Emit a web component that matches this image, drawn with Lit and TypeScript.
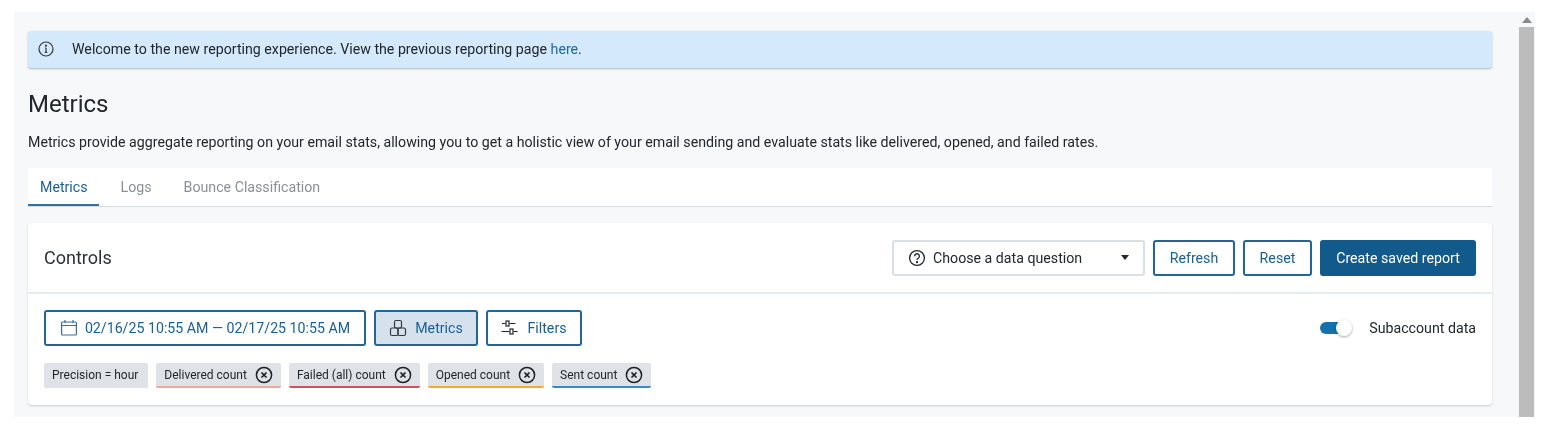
import { LitElement, html, css } from "lit";
import { customElement } from "lit/decorators.js";

const closeIcon = html`<svg class="x" viewBox="0 0 18 18" width="18" height="18" fill="none" stroke="#1c2125" stroke-width="1.5"><circle cx="9" cy="9" r="7.6"/><path d="M6.5 6.5l5 5M11.5 6.5l-5 5" stroke-width="1.7"/></svg>`;

@customElement("app-root")
export class AppRoot extends LitElement {
  static styles = css`
    :host { display: block; height: 428px; background: #fff; font-family: Roboto, "Liberation Sans", sans-serif; color: #22272b; overflow: hidden; padding: 12px 15px 0 14px; box-sizing: border-box; }
    * { box-sizing: border-box; }
    .frame { display: flex; height: 405px; background: #f6f8fa; filter: blur(0.35px); }
    .page { flex: 1; min-width: 0; padding: 19px 13px 0 14px; }
    .scroll { width: 30px; display: flex; flex-direction: column; align-items: flex-end; padding-right: 1px; }
    .arrow { width: 15px; height: 15px; display: flex; align-items: center; justify-content: center; }
    .thumb { width: 15px; flex: 1; background: #bcbcbc; }
    .banner { height: 37px; background: #d4e9fb; border-radius: 3px; box-shadow: 0 1px 2px rgba(40,60,80,.35); display: flex; align-items: center; padding: 0 0 2px 9px; font-size: 14.2px; gap: 17px; }
    .banner a { color: #1c6aa4; }
    h1 { font-size: 24px; font-weight: 400; line-height: 32px; margin: 20px 0 0; color: #22272b; }
    p { font-size: 14.2px; line-height: 20px; margin: 12px 0 0; }
    .tabs { display: flex; height: 39px; margin-top: 16px; background: #fff; border-bottom: 1px solid #d5dbe1; font-size: 14.2px; color: #8a9097; }
    .tab { padding: 0 12px; line-height: 39px; height: 38px; margin-right: 8px; }
    .tab.on { color: #1a5f92; border-bottom: 2px solid #2f72a5; padding-right: 11px; margin-right: 10px; }
    .card { margin-top: 16px; height: 182px; background: #fff; border-radius: 4px; box-shadow: 0 1px 2px rgba(40,60,80,.22); }
    .head { height: 71px; border-bottom: 2px solid #e7eaee; display: flex; align-items: center; padding: 0 16px; gap: 8px; }
    .head h2 { font-size: 18px; font-weight: 400; margin: 0; flex: 1; color: #2b3138; }
    .btn { height: 36px; display: inline-flex; align-items: center; justify-content: center; border: 2px solid #246596; border-radius: 3px; background: #fff; color: #1a5f92; font-size: 14.2px; gap: 8px; }
    .btn.primary { background: #12598c; border-color: #12598c; color: #fff; width: 156px; }
    .btn.active { background: #d5e2ee; }
    .btn.date { width: 322px; gap: 7px; }
    .btn.refresh { width: 82px; }
    .btn.reset { width: 69px; }
    .btn.metrics { width: 104px; }
    .btn.filters { width: 96px; }
    .select { width: 253px; height: 36px; border: 2px solid #dadfe4; border-radius: 3px; display: flex; align-items: center; padding: 0 14px; font-size: 14.2px; gap: 7px; color: #22272b; }
    .select span { flex: 1; }
    .caret { width: 0; height: 0; border-left: 4px solid transparent; border-right: 4px solid transparent; border-top: 5px solid #22272b; }
    .body { padding: 16px; }
    .row { display: flex; align-items: center; gap: 8px; }
    .spacer { flex: 1; }
    .switch { display: flex; align-items: center; font-size: 14.2px; gap: 17px; }
    .track { width: 32px; height: 12px; position: relative; }
    .track::before { content: ""; position: absolute; left: 0; top: 0; width: 26px; height: 12px; border-radius: 6px; background: #1371ae; }
    .knob { position: absolute; right: 0; top: -2px; width: 16px; height: 16px; border-radius: 50%; background: #fff; box-shadow: 0 1px 3px rgba(0,0,0,.35); }
    .chips { display: flex; gap: 8px; margin-top: 17px; }
    .chip { height: 25px; background: #dfe3e7; border-radius: 2px; padding: 0 8px; display: flex; align-items: center; gap: 8px; font-size: 12px; border-bottom: 2px solid transparent; }
    .chip.plain { padding: 0 10px 0 8px; }
    .chip.d { border-bottom-color: #e8a99c; }
    .chip.f { border-bottom-color: #d0505b; }
    .chip.o { border-bottom-color: #f0a838; }
    .chip.s { border-bottom-color: #3a88c4; }
  `;

  render() {
    return html`<div class="frame">
      <div class="page">
        <div class="banner">
          <svg width="18" height="18" viewBox="0 0 18 18" fill="none" stroke="#33393f" stroke-width="1.2"><circle cx="9" cy="9" r="7"/><path d="M9 8v4.2M7.8 12.4h2.4M8 8h1" /><circle cx="9" cy="5.7" r=".5" fill="#33393f"/></svg>
          <div>Welcome to the new reporting experience. View the previous reporting page <a>here</a>.</div>
        </div>
        <h1>Metrics</h1>
        <p>Metrics provide aggregate reporting on your email stats, allowing you to get a holistic view of your email sending and evaluate stats like delivered, opened, and failed rates.</p>
        <div class="tabs">
          <div class="tab on">Metrics</div>
          <div class="tab">Logs</div>
          <div class="tab">Bounce Classification</div>
        </div>
        <div class="card">
          <div class="head">
            <h2>Controls</h2>
            <div class="select">
              <svg width="18" height="18" viewBox="0 0 18 18" fill="none" stroke="#22272b" stroke-width="1.3"><circle cx="9" cy="9" r="7.4"/><path d="M6.6 7.2a2.4 2.4 0 1 1 3.7 2c-.9.5-1.3.9-1.3 1.9"/><circle cx="9" cy="13.2" r=".5" fill="#22272b"/></svg>
              <span>Choose a data question</span><i class="caret"></i>
            </div>
            <div class="btn refresh">Refresh</div>
            <div class="btn reset">Reset</div>
            <div class="btn primary">Create saved report</div>
          </div>
          <div class="body">
            <div class="row">
              <div class="btn date">
                <svg width="18" height="18" viewBox="0 0 18 18" fill="none" stroke="#3a719c" stroke-width="1.2"><rect x="1.6" y="3" width="14.8" height="13" rx="1"/><path d="M1.6 6.5h14.8M5 1v3M13 1v3"/></svg>
                02/16/25 10:55 AM — 02/17/25 10:55 AM
              </div>
              <div class="btn active metrics">
                <svg width="18" height="18" viewBox="0 0 18 18" fill="none" stroke="#33393f" stroke-width="1.2"><rect x="5.5" y="1.5" width="7" height="7.5" rx="1.5"/><rect x="1.5" y="9" width="7.5" height="7.5" rx="1.5"/><rect x="9" y="9" width="7.5" height="7.5" rx="1.5"/></svg>
                Metrics
              </div>
              <div class="btn filters">
                <svg width="18" height="18" viewBox="0 0 18 18" fill="none" stroke="#22272b" stroke-width="1.2"><path d="M1 4.5h3.5M8.5 4.5h6M0.5 12.5h8M12.5 12.5h4"/><rect x="5" y="2" width="3" height="5"/><rect x="9" y="10" width="3" height="5"/></svg>
                Filters
              </div>
              <div class="spacer"></div>
              <div class="switch"><div class="track"><div class="knob"></div></div>Subaccount data</div>
            </div>
            <div class="chips">
              <div class="chip plain">Precision = hour</div>
              <div class="chip d">Delivered count ${closeIcon}</div>
              <div class="chip f">Failed (all) count ${closeIcon}</div>
              <div class="chip o">Opened count ${closeIcon}</div>
              <div class="chip s">Sent count ${closeIcon}</div>
            </div>
          </div>
        </div>
      </div>
      <div class="scroll">
        <div class="arrow"><svg width="12" height="8" viewBox="0 0 12 8"><path d="M6 1l5 6H1z" fill="#8a8a8a"/></svg></div>
        <div class="thumb"></div>
      </div>
    </div>`;
  }
}
